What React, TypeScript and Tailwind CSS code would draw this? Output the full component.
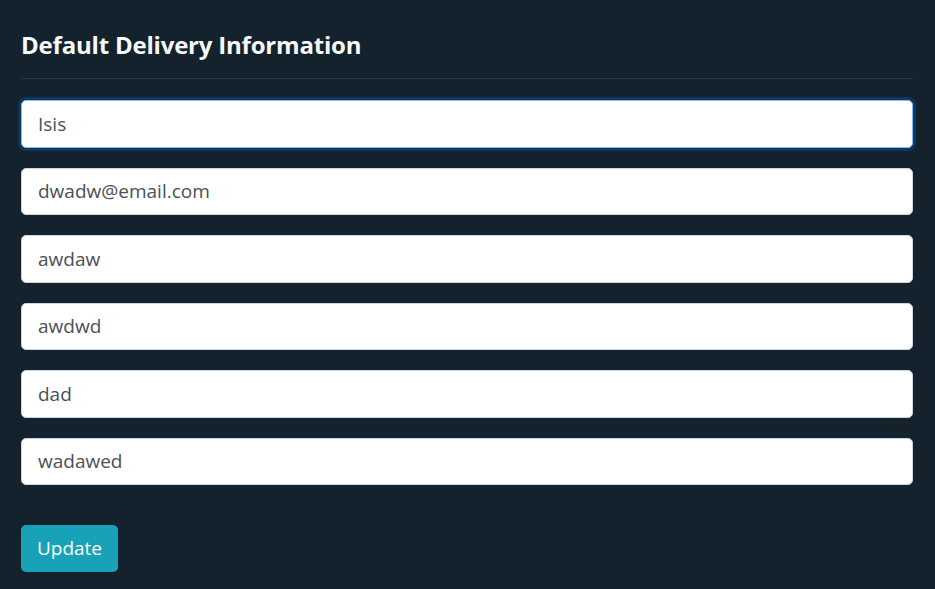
import React, { useState } from "react";

const initial = ["Isis", "dwadw@email.com", "awdaw", "awdwd", "dad", "wadawed"];

export default function App() {
  const [values, setValues] = useState(initial);

  return (
    <div
      className="min-h-screen w-full bg-[#14222e] pl-[21px] pr-[22px] pt-[30px]"
      style={{ fontFamily: '"Open Sans", "Noto Sans", sans-serif' }}
    >
      <h4 className="text-[24px] font-bold leading-[29px] text-[#f8f9fa] tracking-[-0.2px]">
        Default Delivery Information
      </h4>
      <hr className="mt-[19px] mb-[21px] border-t border-[#2a3744]" />
      <form className="flex flex-col gap-5" onSubmit={(e) => e.preventDefault()}>
        {values.map((v, i) => (
          <input
            key={i}
            value={v}
            onChange={(e) => {
              const next = [...values];
              next[i] = e.target.value;
              setValues(next);
            }}
            className={
              i === 0
                ? "h-[47.5px] w-full rounded-[5px] border border-[#80bdff] bg-white px-4 text-[19px] text-[#495057] outline-none shadow-[0_0_0_3px_#10365a]"
                : "h-[47.5px] w-full rounded-[5px] border border-[#ced4da] bg-white px-4 text-[19px] text-[#495057] outline-none"
            }
          />
        ))}
        <div className="pt-5">
          <button
            type="submit"
            className="h-[47px] w-[97px] rounded-[5px] bg-[#17a2b8] text-[19px] text-white"
          >
            Update
          </button>
        </div>
      </form>
    </div>
  );
}
